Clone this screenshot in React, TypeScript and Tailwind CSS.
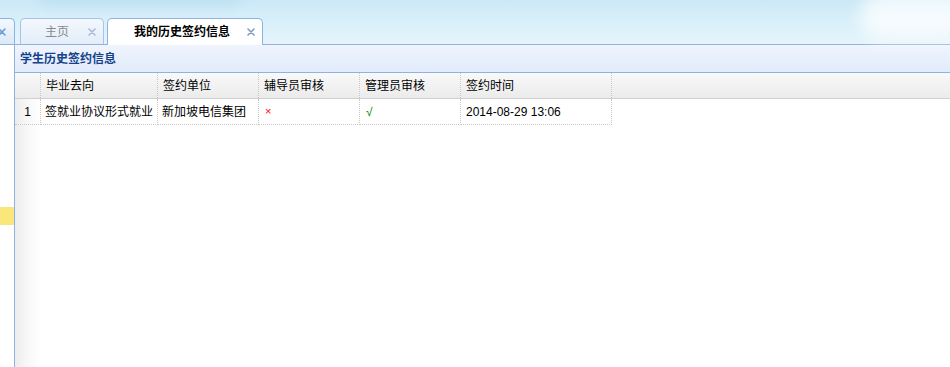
import React from 'react';

const font = { fontFamily: '"Liberation Sans", "Noto Sans CJK SC", sans-serif' };

const TabX = ({ color = '#8fa8c8' }: { color?: string }) => (
  <svg width="8" height="8" viewBox="0 0 8 8">
    <path d="M1 1L7 7M7 1L1 7" stroke={color} strokeWidth="1.6" strokeLinecap="round" />
  </svg>
);

const columns = [
  { title: '毕业去向', w: 'w-[117px]' },
  { title: '签约单位', w: 'w-[101px]' },
  { title: '辅导员审核', w: 'w-[101px]' },
  { title: '管理员审核', w: 'w-[101px]' },
  { title: '签约时间', w: 'w-[151px]' },
];

const App: React.FC = () => {
  return (
    <div className="w-[950px] h-[367px] overflow-hidden bg-white text-[12px] text-black flex flex-col" style={font}>
      {/* banner + tabs */}
      <div className="relative h-[45px] shrink-0 bg-gradient-to-b from-[#cbe8f6] via-[#d9f0fa] to-[#e4f4fb] border-b border-[#8db2e3]">
        <div className="absolute right-[-20px] top-[-8px] w-[110px] h-[48px] rounded-full bg-white/75 blur-[9px]" />
        <div className="absolute left-[40px] top-[-10px] w-[200px] h-[16px] rounded-full bg-[#b9def2]/60 blur-[4px]" />
        <div className="absolute left-0 right-0 bottom-0 flex items-end h-[27px]">
          <div className="w-[15px] h-[26px] rounded-tr-[5px] border border-l-0 border-b-0 border-[#8db2e3] bg-gradient-to-b from-[#f3f8fd] to-[#dde9f8] flex items-center overflow-hidden">
            <span className="-ml-[2px] flex"><TabX color="#6d9fd8" /></span>
          </div>
          <div className="ml-[5px] w-[84px] h-[26px] rounded-t-[5px] border border-b-0 border-[#a9c3e6] bg-gradient-to-b from-[#f3f8fd] to-[#e3edf9] flex items-center">
            <span className="ml-[24px] text-[#8a8a8a]">主页</span>
            <span className="ml-auto mr-[7px] flex"><TabX color="#a8bcd6" /></span>
          </div>
          <div className="ml-[3px] w-[156px] h-[27px] rounded-t-[5px] border border-b-0 border-[#8db2e3] bg-white flex items-center -mb-px">
            <span className="ml-[26px] font-bold">我的历史签约信息</span>
            <span className="ml-auto mr-[7px] flex"><TabX color="#7f9cc4" /></span>
          </div>
        </div>
      </div>

      <div className="flex flex-1 min-h-0">
        {/* collapsed left region */}
        <div className="w-[15px] shrink-0 bg-white border-r border-[#8db2e3] pt-[162px]">
          <div className="h-[18px] bg-[#fbe67c]" />
        </div>

        <div className="flex-1 flex flex-col min-w-0">
          {/* panel title */}
          <div className="h-[28px] shrink-0 flex items-center pl-[5px] bg-gradient-to-b from-[#eff4fe] to-[#e2ebfb] border-b border-[#8db2e3]">
            <span className="font-bold text-[#15428b]">学生历史签约信息</span>
          </div>

          {/* grid header */}
          <div className="h-[26px] shrink-0 flex bg-gradient-to-b from-[#f9f9f9] to-[#ebebeb] border-b border-[#d0d0d0]">
            <div className="w-[26px] shrink-0 border-r border-dotted border-[#c8c8c8]" />
            {columns.map((c) => (
              <div key={c.title} className={`${c.w} shrink-0 border-r border-dotted border-[#c8c8c8] flex items-center pl-[5px]`}>
                {c.title}
              </div>
            ))}
          </div>

          {/* grid body */}
          <div className="flex-1 flex min-h-0">
            <div className="w-[26px] shrink-0 bg-gradient-to-r from-[#ececec] via-[#f8f8f8] to-white">
              <div className="h-[26px] flex items-center justify-center border-r border-b border-dotted border-[#c8c8c8]">1</div>
            </div>
            <div className="flex-1">
              <div className="h-[26px] flex">
                <div className="w-[117px] shrink-0 border-r border-b border-dotted border-[#c8c8c8] flex items-center pl-[4px] whitespace-nowrap">签就业协议形式就业</div>
                <div className="w-[101px] shrink-0 border-r border-b border-dotted border-[#c8c8c8] flex items-center pl-[4px]">新加坡电信集团</div>
                <div className="w-[101px] shrink-0 border-r border-b border-dotted border-[#c8c8c8] flex items-center pl-[6px] text-[#ff0000] text-[11px]">×</div>
                <div className="w-[101px] shrink-0 border-r border-b border-dotted border-[#c8c8c8] flex items-center pl-[6px] text-[#008000]">√</div>
                <div className="w-[151px] shrink-0 border-r border-b border-dotted border-[#c8c8c8] flex items-center pl-[5px]">2014-08-29 13:06</div>
              </div>
            </div>
          </div>
        </div>
      </div>
    </div>
  );
};

export default App;
